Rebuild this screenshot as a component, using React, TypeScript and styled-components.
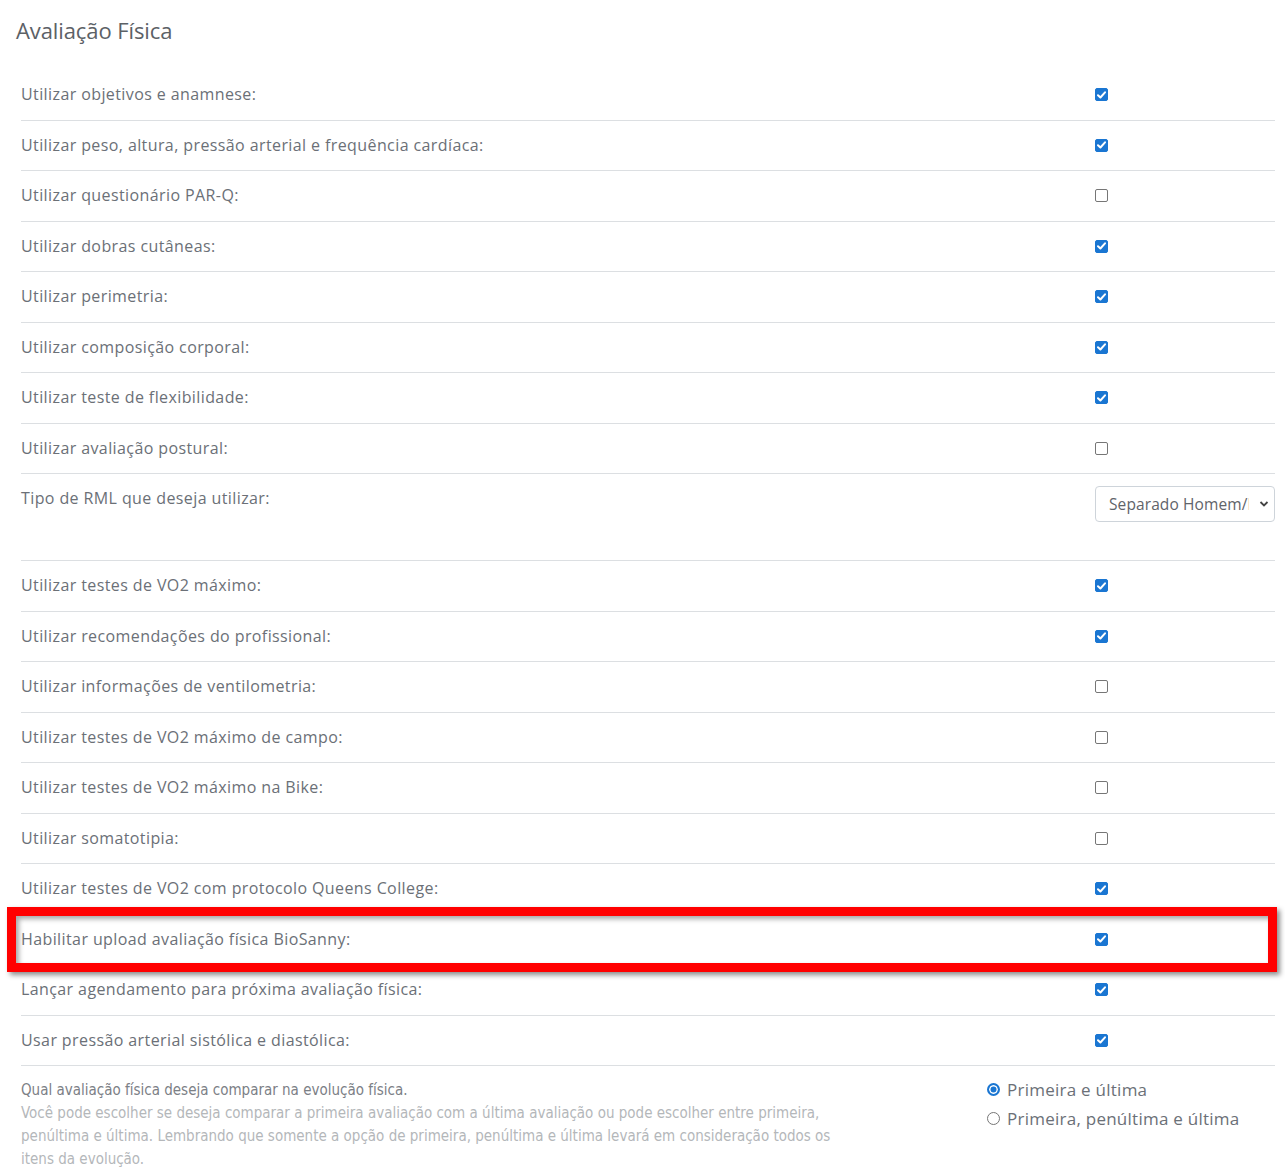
import React from "react";
import styled, { createGlobalStyle } from "styled-components";

const Global = createGlobalStyle`
  html, body { margin: 0; padding: 0; background: #fff; }
  body { font-family: "Open Sans", "Noto Sans", sans-serif; color: #6b7077; }
`;

const Page = styled.div`
  position: relative;
  padding: 16px 10px 8px 16px;
  width: 1285px;
  box-sizing: border-box;
`;

const Title = styled.h2`
  margin: 0 0 26px 0;
  font-size: 22px;
  font-weight: 400;
  line-height: 28px;
  color: #5c6166;
  letter-spacing: -0.1px;
`;

const List = styled.div`
  margin-left: 5px;
  display: flex;
  flex-direction: column;
`;

const Row = styled.div<{ $tall?: boolean }>`
  display: grid;
  grid-template-columns: 1fr 180px;
  column-gap: 8px;
  align-items: start;
  padding: 12px 0 ${(p) => (p.$tall ? "38px" : "12px")} 0;
  min-height: 25.5px;
  border-bottom: 1px solid #dcdfe2;
`;

const Label = styled.span`
  font-size: 16px;
  line-height: 25.5px;
  color: #6b7077;
  letter-spacing: 0.4px;
`;

const Control = styled.div`
  display: flex;
  align-items: center;
  height: 25.5px;
`;

const Box = styled.span<{ $checked: boolean }>`
  display: inline-flex;
  align-items: center;
  justify-content: center;
  width: 13px;
  height: 13px;
  box-sizing: border-box;
  border-radius: 2px;
  background: ${(p) => (p.$checked ? "#1a76d2" : "#fff")};
  border: 1px solid ${(p) => (p.$checked ? "#1a76d2" : "#767676")};
`;

const SelectWrap = styled.div`
  position: relative;
  width: 180px;
  height: 36px;
`;

const Select = styled.div`
  box-sizing: border-box;
  width: 180px;
  height: 36px;
  border: 1px solid #ced4da;
  border-radius: 4px;
  padding: 0 25px 0 13px;
  background: #fff;
`;

const SelectValue = styled.span`
  display: block;
  overflow: hidden;
  white-space: nowrap;
  font-size: 15.5px;
  line-height: 34px;
  color: #5f646a;
  letter-spacing: 0.1px;
`;

const Chevron = styled.svg`
  position: absolute;
  right: 6px;
  top: 14px;
`;

const Bottom = styled.div`
  display: grid;
  grid-template-columns: 1fr 288px;
  column-gap: 20px;
  padding-top: 13px;
`;

const Help = styled.div`
  font-family: "Liberation Sans Narrow", "DejaVu Sans Condensed", "Roboto", sans-serif;
  font-size: 15px;
  line-height: 23px;
  color: #b4b7ba;
  max-width: 820px;
`;

const HelpTitle = styled.div`
  color: #7c8086;
`;

const Radios = styled.div`
  display: flex;
  flex-direction: column;
  margin-top: -4px;
`;

const RadioRow = styled.label`
  display: flex;
  align-items: center;
  gap: 7px;
  font-size: 17px;
  line-height: 29px;
  color: #6b7077;
  letter-spacing: 0.25px;
`;

const RadioDot = styled.span<{ $on: boolean }>`
  width: 13px;
  height: 13px;
  box-sizing: border-box;
  border-radius: 50%;
  border: ${(p) => (p.$on ? "2px solid #1a76d2" : "1px solid #767676")};
  background: ${(p) => (p.$on ? "#1a76d2" : "#fff")};
  box-shadow: ${(p) => (p.$on ? "inset 0 0 0 1.5px #fff" : "none")};
  flex: none;
`;

const Highlight = styled.div`
  position: absolute;
  left: 7px;
  top: 907px;
  width: 1270px;
  height: 65px;
  box-sizing: border-box;
  border: 9px solid #ff0000;
  box-shadow: 3px 3px 5px rgba(0, 0, 0, 0.45), inset 3px 3px 5px rgba(0, 0, 0, 0.35);
  pointer-events: none;
`;

const Check = () => (
  <svg width="9" height="8" viewBox="0 0 9 8">
    <path d="M1 4.2 L3.4 6.5 L8 1.3" fill="none" stroke="#fff" strokeWidth="2" strokeLinecap="round" strokeLinejoin="round" />
  </svg>
);

const Checkbox = ({ checked }: { checked: boolean }) => (
  <Box $checked={checked}>{checked && <Check />}</Box>
);

type Item = { label: string; checked?: boolean; select?: boolean };

const items: Item[] = [
  { label: "Utilizar objetivos e anamnese:", checked: true },
  { label: "Utilizar peso, altura, pressão arterial e frequência cardíaca:", checked: true },
  { label: "Utilizar questionário PAR-Q:", checked: false },
  { label: "Utilizar dobras cutâneas:", checked: true },
  { label: "Utilizar perimetria:", checked: true },
  { label: "Utilizar composição corporal:", checked: true },
  { label: "Utilizar teste de flexibilidade:", checked: true },
  { label: "Utilizar avaliação postural:", checked: false },
  { label: "Tipo de RML que deseja utilizar:", select: true },
  { label: "Utilizar testes de VO2 máximo:", checked: true },
  { label: "Utilizar recomendações do profissional:", checked: true },
  { label: "Utilizar informações de ventilometria:", checked: false },
  { label: "Utilizar testes de VO2 máximo de campo:", checked: false },
  { label: "Utilizar testes de VO2 máximo na Bike:", checked: false },
  { label: "Utilizar somatotipia:", checked: false },
  { label: "Utilizar testes de VO2 com protocolo Queens College:", checked: true },
  { label: "Habilitar upload avaliação física BioSanny:", checked: true },
  { label: "Lançar agendamento para próxima avaliação física:", checked: true },
  { label: "Usar pressão arterial sistólica e diastólica:", checked: true },
];

export default function App() {
  return (
    <Page>
      <Global />
      <Title>Avaliação Física</Title>
      <List>
        {items.map((it) => (
          <Row key={it.label} $tall={it.select}>
            <Label>{it.label}</Label>
            {it.select ? (
              <SelectWrap>
                <Select>
                  <SelectValue>Separado Homem/Mulher</SelectValue>
                </Select>
                <Chevron width="10" height="8" viewBox="0 0 10 8">
                  <path d="M1.5 2 L5 5.5 L8.5 2" fill="none" stroke="#444" strokeWidth="1.8" />
                </Chevron>
              </SelectWrap>
            ) : (
              <Control>
                <Checkbox checked={!!it.checked} />
              </Control>
            )}
          </Row>
        ))}
        <Bottom>
          <Help>
            <HelpTitle>Qual avaliação física deseja comparar na evolução física.</HelpTitle>
            Você pode escolher se deseja comparar a primeira avaliação com a última avaliação ou pode escolher entre primeira,
            penúltima e última. Lembrando que somente a opção de primeira, penúltima e última levará em consideração todos os
            itens da evolução.
          </Help>
          <Radios>
            <RadioRow>
              <RadioDot $on />
              Primeira e última
            </RadioRow>
            <RadioRow>
              <RadioDot $on={false} />
              Primeira, penúltima e última
            </RadioRow>
          </Radios>
        </Bottom>
      </List>
      <Highlight />
    </Page>
  );
}
